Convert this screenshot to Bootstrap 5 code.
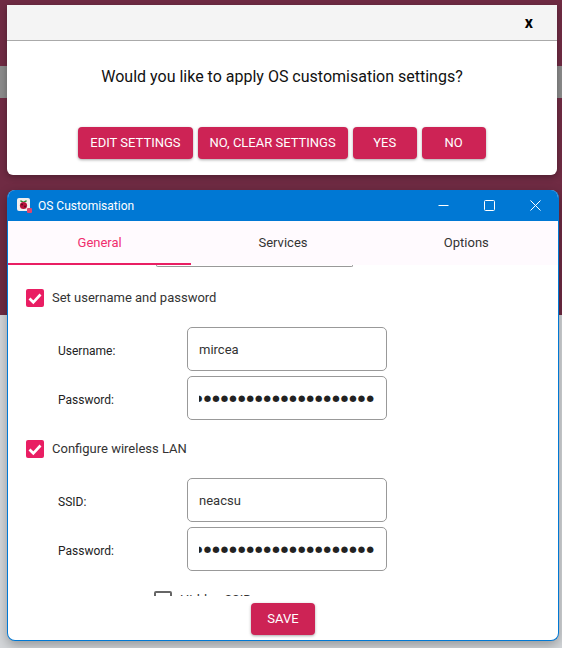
<!DOCTYPE html>
<html>
<head>
    <title>OS Customisation</title>
    <link href="https://cdn.jsdelivr.net/npm/bootstrap@5.3.2/dist/css/bootstrap.min.css" rel="stylesheet">
    <style>
        html, body {
            height: 100%;
        }
        body {
            font-family: Roboto, "Liberation Sans", sans-serif;
            font-size: 13px;
            background: #d4d7da;
            overflow: hidden;
        }
        .backdrop {
            background: #6f2b43;
            height: 315px;
            margin-bottom: -315px;
            padding-top: 66px;
        }
        .backdrop-band {
            height: 32px;
            background: #8a8a8a;
        }
        .stage {
            position: relative;
            padding: 5px 5px 0 7px;
        }
        .dialog-box {
            background: #fff;
            border-radius: 0 0 6px 6px;
            height: 170px;
            box-shadow: 0 2px 6px rgba(0, 0, 0, .3);
        }
        .dialog-head {
            height: 36px;
            background: #f4f4f4;
            border-bottom: 1px solid #aaa;
            padding-right: 24px;
            font-size: 16px;
            font-weight: 700;
            color: #000;
        }
        .dialog-msg {
            font-size: 16px;
            color: #111;
            margin-top: 26px;
            line-height: 20px;
        }
        .dialog-btns {
            margin-top: 40px;
            gap: 5px;
        }
        .pi-btn {
            background: #cd2355;
            color: #fff;
            border: 0;
            border-radius: 4px;
            height: 32px;
            font-size: 13px;
            line-height: 32px;
            padding: 0 12px;
            box-shadow: 0 1px 3px rgba(0, 0, 0, .35);
        }
        .pi-btn:hover {
            background: #cd2355;
            color: #fff;
        }
        .pi-btn-wide {
            width: 64px;
            padding: 0;
        }
        .win {
            margin-top: 15px;
            margin-right: -2px;
            height: 451px;
            background: #fff;
            border: 1px solid #0078d4;
            border-top: 0;
            border-radius: 8px;
            box-shadow: 0 4px 12px rgba(0, 0, 0, .3);
            overflow: hidden;
        }
        .win-title {
            height: 31px;
            background: #0078d4;
            color: #fff;
            font-size: 12px;
            padding-left: 9px;
        }
        .win-icon {
            margin-right: 6px;
        }
        .win-ctrl {
            width: 46px;
            height: 31px;
        }
        .tab-row {
            height: 44px;
            background: #fffafe;
        }
        .tab-item {
            flex: 1;
            color: #333;
            font-size: 13px;
        }
        .tab-on {
            color: #f02e6e;
            border-bottom: 2px solid #e91e63;
            padding-top: 2px;
        }
        .pane {
            height: 331px;
            overflow: hidden;
            padding: 24px 0 0 18px;
            position: relative;
        }
        .prev-edge {
            position: absolute;
            left: 148px;
            top: 0;
            width: 197px;
            height: 2px;
            border: 1px solid #999;
            border-top: 0;
            border-radius: 0 0 3px 3px;
        }
        .check-row {
            gap: 8px;
            height: 18px;
            font-size: 13px;
            color: #333;
        }
        .check-box {
            width: 18px;
            height: 18px;
            background: #e91e63;
            border-radius: 2px;
            flex: none;
        }
        .check-empty {
            background: #fff;
            border: 2px solid #666;
        }
        .hidden-row {
            margin-left: 128px;
        }
        .sec-gap {
            margin-top: 20px;
        }
        .field-row {
            height: 44px;
            padding-left: 32px;
        }
        .field-row + .field-row {
            margin-top: 5px;
        }
        .field-label {
            width: 129px;
            font-size: 12px;
            color: #222;
            padding-top: 3px;
        }
        .field-box {
            width: 200px;
            height: 44px;
            border: 1px solid #999;
            border-radius: 5px;
            padding: 1px 0 0 11px;
            color: #333;
            font-size: 13px;
            background: #fff;
        }
        .dots {
            width: 176px;
            font-family: "DejaVu Sans", sans-serif;
            font-size: 8.5px;
            letter-spacing: 1.15px;
            overflow: hidden;
            white-space: nowrap;
            color: #222;
            direction: rtl;
        }
        .save-bar {
            margin-top: 7px;
        }
    </style>
</head>
<body>

<div class="backdrop"><div class="backdrop-band"></div></div>

<div class="stage">
    <div class="dialog-box">
        <div class="dialog-head d-flex align-items-center justify-content-end">x</div>
        <div class="dialog-msg text-center">Would you like to apply OS customisation settings?</div>
        <div class="dialog-btns d-flex justify-content-center">
            <button class="btn pi-btn">EDIT SETTINGS</button>
            <button class="btn pi-btn">NO, CLEAR SETTINGS</button>
            <button class="btn pi-btn pi-btn-wide">YES</button>
            <button class="btn pi-btn pi-btn-wide">NO</button>
        </div>
    </div>

    <div class="win">
        <div class="win-title d-flex align-items-center">
            <svg class="win-icon" width="15" height="15" viewBox="0 0 15 15">
                <rect width="13" height="13" rx="2" fill="#f1eeee"/>
                <circle cx="6.5" cy="7.5" r="3.6" fill="#b5133c"/>
                <circle cx="5" cy="6.5" r="1" fill="#5e0b22"/>
                <circle cx="8" cy="8.5" r="1" fill="#5e0b22"/>
                <path d="M3.5 2l3 1.6L9.5 2v2h-6z" fill="#2c8a35"/>
                <rect x="10" y="10" width="5" height="5" rx="1" fill="#e0456c"/>
            </svg>
            <span class="flex-grow-1">OS Customisation</span>
            <div class="win-ctrl d-flex align-items-center justify-content-center">
                <svg width="11" height="11" viewBox="0 0 11 11"><path d="M.5 5.5h10" stroke="#fff"/></svg>
            </div>
            <div class="win-ctrl d-flex align-items-center justify-content-center">
                <svg width="11" height="11" viewBox="0 0 11 11"><rect x=".5" y=".5" width="10" height="10" rx="1" fill="none" stroke="#fff"/></svg>
            </div>
            <div class="win-ctrl d-flex align-items-center justify-content-center">
                <svg width="11" height="11" viewBox="0 0 11 11"><path d="M.5.5l10 10M10.5.5l-10 10" stroke="#fff"/></svg>
            </div>
        </div>

        <div class="tab-row d-flex text-center">
            <div class="tab-item tab-on d-flex align-items-center justify-content-center">General</div>
            <div class="tab-item d-flex align-items-center justify-content-center">Services</div>
            <div class="tab-item d-flex align-items-center justify-content-center">Options</div>
        </div>

        <div class="pane">
            <div class="prev-edge"></div>
            <div class="check-row d-flex align-items-center">
                <svg class="check-box" viewBox="0 0 18 18"><path d="M3.5 9.5l3.8 3.8L14.5 5.5" fill="none" stroke="#fff" stroke-width="2.7"/></svg>
                Set username and password
            </div>
            <div class="field-row d-flex align-items-center sec-gap">
                <div class="field-label">Username:</div>
                <div class="field-box d-flex align-items-center">mircea</div>
            </div>
            <div class="field-row d-flex align-items-center">
                <div class="field-label">Password:</div>
                <div class="field-box d-flex align-items-center"><span class="dots">●●●●●●●●●●●●●●●●●●●●●●●</span></div>
            </div>
            <div class="check-row d-flex align-items-center sec-gap">
                <svg class="check-box" viewBox="0 0 18 18"><path d="M3.5 9.5l3.8 3.8L14.5 5.5" fill="none" stroke="#fff" stroke-width="2.7"/></svg>
                Configure wireless LAN
            </div>
            <div class="field-row d-flex align-items-center sec-gap">
                <div class="field-label">SSID:</div>
                <div class="field-box d-flex align-items-center">neacsu</div>
            </div>
            <div class="field-row d-flex align-items-center">
                <div class="field-label">Password:</div>
                <div class="field-box d-flex align-items-center"><span class="dots">●●●●●●●●●●●●●●●●●●●●●●●</span></div>
            </div>
            <div class="check-row d-flex align-items-center sec-gap hidden-row">
                <span class="check-box check-empty"></span>
                Hidden SSID
            </div>
        </div>

        <div class="save-bar d-flex justify-content-center">
            <button class="btn pi-btn pi-btn-wide">SAVE</button>
        </div>
    </div>
</div>

<script src="https://cdn.jsdelivr.net/npm/bootstrap@5.3.2/dist/js/bootstrap.bundle.min.js"></script>
</body>
</html>
